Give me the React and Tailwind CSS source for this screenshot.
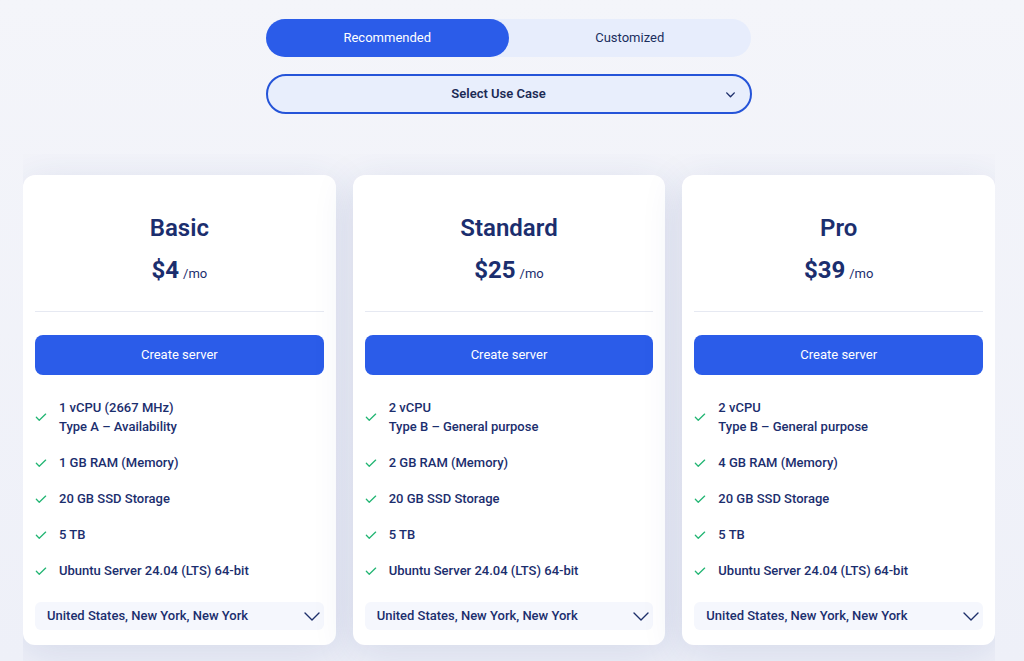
import { useState } from "react";

const plans = [
  {
    name: "Basic",
    price: "$4",
    cpu: "1 vCPU (2667 MHz)",
    type: "Type A – Availability",
    ram: "1 GB RAM (Memory)",
  },
  {
    name: "Standard",
    price: "$25",
    cpu: "2 vCPU",
    type: "Type B – General purpose",
    ram: "2 GB RAM (Memory)",
  },
  {
    name: "Pro",
    price: "$39",
    cpu: "2 vCPU",
    type: "Type B – General purpose",
    ram: "4 GB RAM (Memory)",
  },
];

function Check() {
  return (
    <svg width="14" height="14" viewBox="0 0 24 24" fill="none" stroke="#22b573" strokeWidth="2.2" strokeLinecap="round" strokeLinejoin="round" className="shrink-0">
      <path d="M4 12.5l5 5L20 7" />
    </svg>
  );
}

function Chevron({ size = 14, width = 2.5 }) {
  return (
    <svg width={size} height={size} viewBox="0 0 24 24" fill="none" stroke="#1e2f6b" strokeWidth={width} strokeLinecap="round" strokeLinejoin="round">
      <path d="M5 9l7 7 7-7" />
    </svg>
  );
}

function Feature({ children }) {
  return (
    <li className="flex items-center gap-[11px]">
      <Check />
      <div className="leading-[19px]">{children}</div>
    </li>
  );
}

function PlanCard({ plan }) {
  return (
    <div className="flex-1 bg-white rounded-xl shadow-[0_8px_40px_rgba(40,60,140,0.13)] px-3 pt-[38px] pb-[15px]">
      <h2 className="text-center text-[24px] font-semibold text-[#1b2e6e] leading-[30px]">{plan.name}</h2>
      <div className="text-center mt-[12px] text-[#1b2e6e] leading-[30px]">
        <span className="text-[24px] font-bold">{plan.price}</span>
        <span className="text-[13px] ml-1">/mo</span>
      </div>
      <div className="border-t border-[#e6e9f2] mt-[22px]" />
      <button className="mt-[23px] w-full h-10 rounded-lg bg-[#2b5ce9] text-white text-[13px]">
        Create server
      </button>
      <ul className="mt-[23px] flex flex-col gap-[17px] text-[13px] font-medium text-[#1b2e6e] -ml-[1px]">
        <Feature>
          <div>{plan.cpu}</div>
          <div>{plan.type}</div>
        </Feature>
        <Feature>{plan.ram}</Feature>
        <Feature>20 GB SSD Storage</Feature>
        <Feature>5 TB</Feature>
        <Feature>Ubuntu Server 24.04 (LTS) 64-bit</Feature>
      </ul>
      <div className="mt-[22px] h-[28px] rounded-md bg-[#f5f7fd] flex items-center justify-between pl-3 pr-0">
        <span className="text-[13px] font-medium text-[#1b2e6e]">United States, New York, New York</span>
        <Chevron size={24} width={1.4} />
      </div>
    </div>
  );
}

export default function App() {
  const [tab, setTab] = useState("rec");
  return (
    <div className="min-h-[661px] bg-gradient-to-b from-[#f4f5fa] to-[#eef0f8] font-['Roboto',sans-serif] overflow-hidden">
      <div className="flex flex-col items-center pt-[19px] pr-[7px]">
        <div className="w-[485px] h-[38px] rounded-full bg-[#e7edfc] flex text-[13px]">
          <button
            onClick={() => setTab("rec")}
            className={tab === "rec" ? "flex-1 rounded-full bg-[#2b5ce9] text-white" : "flex-1 rounded-full text-[#1b2e5e]"}
          >
            Recommended
          </button>
          <button
            onClick={() => setTab("cus")}
            className={tab === "cus" ? "flex-1 rounded-full bg-[#2b5ce9] text-white" : "flex-1 rounded-full text-[#1b2e5e]"}
          >
            Customized
          </button>
        </div>
        <button className="mt-[17px] w-[486px] h-[40px] rounded-full border-2 border-[#2554d8] bg-[#e8eefc] flex items-center pl-[6px] pr-[13px] text-[13px] font-semibold text-[#1b2a55]">
          <span className="flex-1 text-center">Select Use Case</span>
          <Chevron size={13} width={2.6} />
        </button>
      </div>
      <div className="mx-[23px] w-[972px] mt-[40px] pt-[21px] overflow-hidden pb-[17px] flex gap-[17px]">
        {plans.map((p) => (
          <PlanCard key={p.name} plan={p} />
        ))}
      </div>
    </div>
  );
}
